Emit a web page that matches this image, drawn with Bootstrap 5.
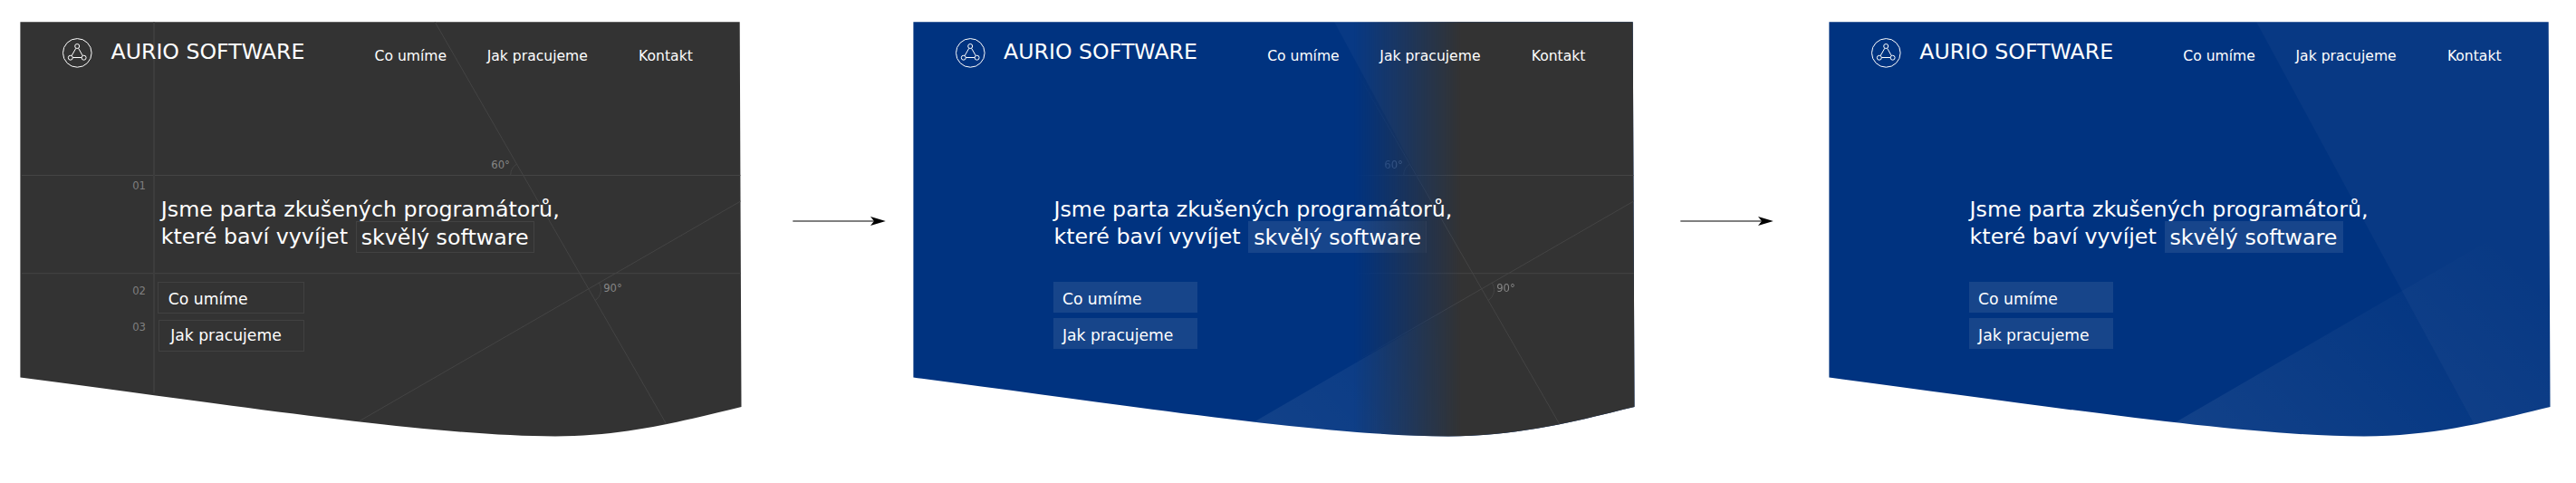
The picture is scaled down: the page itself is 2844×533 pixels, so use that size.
<!DOCTYPE html>
<html lang="cs">
<head>
<meta charset="utf-8">
<title>Aurio Software</title>
<link href="https://cdn.jsdelivr.net/npm/bootstrap@5.3.0/dist/css/bootstrap.min.css" rel="stylesheet">
<style>
  body { font-family: "DejaVu Sans", sans-serif; background: #fff; overflow: hidden; }
  .stage { padding: 24px 0 0 22px; height: 533px; }
  .hero { width: 797px; height: 460px; color: #fff; }
  .backdrop { left: 0; top: 0; width: 797px; height: 460px; overflow: visible; }
  .hero-body { padding-top: 17px; }
  .topbar { height: 34px; padding-left: 46px; }
  .logo { width: 34px; height: 34px; }
  .brand-name { font-size: 23.65px; line-height: 28px; margin: 2px 77.2px 0 20.5px; }
  .topbar a { font-size: 15.6px; line-height: 18px; margin-top: 12px; }
  .topbar a + a { margin-left: 44.6px; }
  .topbar a + a + a { margin-left: 56.2px; }
  .headline { font-size: 23.75px; line-height: 30px; font-weight: 400; margin: 141px 0 0 155.8px; }
  .hl { padding: 3.5px 6.2px 4px 5.9px; margin-left: 1.2px; }
  .actions { margin: 35px 0 0 155.4px; width: 159px; }
  .action { font-size: 17.2px; line-height: 20px; height: 34px; padding: 9px 0 0 9.9px; background: #17458a; }
  .action + .action { margin-top: 6px; }
  .final .hl { background: rgba(255,255,255,.09); }
  .blend .hl { background: linear-gradient(90deg, rgba(255,255,255,.09) 60%, rgba(255,255,255,.02) 100%);
               box-shadow: inset -1px 0 rgba(255,255,255,.04); }
  .draft .hl { box-shadow: inset 0 0 0 1px #424242; }
  .draft .actions { margin-left: 152px; width: 161.5px; }
  .draft .action { background: none; border: 1px solid #414141; height: 35px; padding: 8px 0 0 10.8px; }
  .draft .action + .action { margin: 7px 0 0 1px; padding: 6px 0 0 12.2px; }
  .arrow { width: 104px; height: 12px; margin-top: 214px; }
  .arrow-a { margin-left: 56px; margin-right: 28.6px; }
  .arrow-b { margin-left: 50.6px; margin-right: 59.6px; }
</style>
</head>
<body>
<svg width="0" height="0" class="position-absolute">
  <defs>
    <path id="shape" d="M22.4 24.3H816.7L818.5 449C765 461.6 695 481.4 613 481.4C480 481.4 270 449 22.4 416.6Z"/>
    <clipPath id="clip"><use href="#shape"/></clipPath>
    <linearGradient id="glow" gradientUnits="userSpaceOnUse" x1="408" y1="464" x2="686" y2="186">
      <stop offset="0" stop-color="#fff" stop-opacity=".07"/><stop offset="1" stop-color="#fff" stop-opacity="0"/>
    </linearGradient>
    <linearGradient id="fade" gradientUnits="userSpaceOnUse" x1="509" y1="0" x2="627" y2="0">
      <stop offset="0" stop-color="#fff" stop-opacity="0"/><stop offset="1" stop-color="#fff"/>
    </linearGradient>
    <mask id="reveal" maskUnits="userSpaceOnUse" x="0" y="0" width="850" height="533" style="mask-type:alpha">
      <rect width="850" height="533" fill="url(#fade)"/>
    </mask>
    <!-- dark construction-grid version -->
    <g id="grid">
      <use href="#shape" fill="#333"/>
      <g clip-path="url(#clip)" fill="none" stroke="#444">
        <path d="M24 193.5H818M24 301.7H818"/>
        <path d="M480.1 24L736.3 469M818 221.8L397 464.5"/>
        <path d="M563.7 193.5A14.5 14.5 0 0 1 571 180.8M661 311.6A14 14 0 0 1 656.8 331.6"/>
      </g>
      <g fill="#868686" font-size="11.65">
        <text x="542.3" y="186">60°</text><text x="666.2" y="322">90°</text>
      </g>
    </g>
    <g id="logo" fill="none" stroke="#fff">
      <circle cx="17.3" cy="17.4" r="15.8" stroke-width="1"/>
      <g stroke-width="1">
        <circle cx="17.2" cy="10" r="2.5"/><circle cx="9.8" cy="22.7" r="2.5"/><circle cx="24.6" cy="22.7" r="2.5"/>
        <path d="M15.8 12.3L11.2 20.3M18.6 12.3L23.2 20.3M12.3 22.5H22.1"/>
      </g>
    </g>
    <g id="arrow"><path d="M.3 6H90" stroke="#000" fill="none"/><path d="M102.8 6L86 11L90 6L86 1Z"/></g>
  </defs>
</svg>

<main class="stage d-flex align-items-start">
  <section class="hero draft position-relative flex-shrink-0">
    <svg class="backdrop position-absolute" viewBox="22 24 797 460">
      <use href="#grid"/>
      <path d="M170 24.5V433.5" stroke="#3d3d3d" stroke-width="2"/>
      <g fill="#808080" font-size="11.65">
        <text x="146.2" y="209">01</text><text x="146.2" y="325">02</text><text x="146.2" y="365">03</text>
      </g>
    </svg>
    <div class="hero-body position-relative">
      <header class="topbar d-flex align-items-start">
        <svg class="logo" viewBox="0 0 34 34"><use href="#logo"/></svg>
        <span class="brand-name text-nowrap">AURIO SOFTWARE</span>
        <a class="text-reset text-decoration-none text-nowrap">Co umíme</a>
        <a class="text-reset text-decoration-none text-nowrap">Jak pracujeme</a>
        <a class="text-reset text-decoration-none text-nowrap">Kontakt</a>
      </header>
      <h1 class="headline text-nowrap">Jsme parta zkušených programátorů,<br>které baví vyvíjet <span class="hl">skvělý software</span></h1>
      <div class="actions d-flex flex-column">
        <a class="action text-reset text-decoration-none">Co umíme</a>
        <a class="action text-reset text-decoration-none">Jak pracujeme</a>
      </div>
    </div>
  </section>

  <svg class="arrow arrow-a flex-shrink-0" viewBox="0 0 104 12"><use href="#arrow"/></svg>

  <section class="hero blend position-relative flex-shrink-0">
    <svg class="backdrop position-absolute" viewBox="22 24 797 460">
      <use href="#shape" fill="#003380"/>
      <g clip-path="url(#clip)"><g transform="translate(-7)">
        <path d="M494 24L735.5 470H840V24Z" fill="#fff" fill-opacity=".032"/>
        <path d="M404 466.5L655 321L840 214V490H404Z" fill="url(#glow)"/>
      </g></g>
      <g mask="url(#reveal)"><use href="#grid"/></g>
    </svg>
    <div class="hero-body position-relative">
      <header class="topbar d-flex align-items-start">
        <svg class="logo" viewBox="0 0 34 34"><use href="#logo"/></svg>
        <span class="brand-name text-nowrap">AURIO SOFTWARE</span>
        <a class="text-reset text-decoration-none text-nowrap">Co umíme</a>
        <a class="text-reset text-decoration-none text-nowrap">Jak pracujeme</a>
        <a class="text-reset text-decoration-none text-nowrap">Kontakt</a>
      </header>
      <h1 class="headline text-nowrap">Jsme parta zkušených programátorů,<br>které baví vyvíjet <span class="hl">skvělý software</span></h1>
      <div class="actions d-flex flex-column">
        <a class="action text-reset text-decoration-none">Co umíme</a>
        <a class="action text-reset text-decoration-none">Jak pracujeme</a>
      </div>
    </div>
  </section>

  <svg class="arrow arrow-b flex-shrink-0" viewBox="0 0 104 12"><use href="#arrow"/></svg>

  <section class="hero final position-relative flex-shrink-0">
    <svg class="backdrop position-absolute" viewBox="22 24 797 460">
      <use href="#shape" fill="#003380"/>
      <g clip-path="url(#clip)">
        <path d="M494 24L735.5 470H840V24Z" fill="#fff" fill-opacity=".032"/>
        <path d="M404 466.5L655 321L840 214V490H404Z" fill="url(#glow)"/>
      </g>
    </svg>
    <div class="hero-body position-relative">
      <header class="topbar d-flex align-items-start">
        <svg class="logo" viewBox="0 0 34 34"><use href="#logo"/></svg>
        <span class="brand-name text-nowrap">AURIO SOFTWARE</span>
        <a class="text-reset text-decoration-none text-nowrap">Co umíme</a>
        <a class="text-reset text-decoration-none text-nowrap">Jak pracujeme</a>
        <a class="text-reset text-decoration-none text-nowrap">Kontakt</a>
      </header>
      <h1 class="headline text-nowrap">Jsme parta zkušených programátorů,<br>které baví vyvíjet <span class="hl">skvělý software</span></h1>
      <div class="actions d-flex flex-column">
        <a class="action text-reset text-decoration-none">Co umíme</a>
        <a class="action text-reset text-decoration-none">Jak pracujeme</a>
      </div>
    </div>
  </section>
</main>
<script src="https://cdn.jsdelivr.net/npm/bootstrap@5.3.0/dist/js/bootstrap.bundle.min.js"></script>
</body>
</html>
